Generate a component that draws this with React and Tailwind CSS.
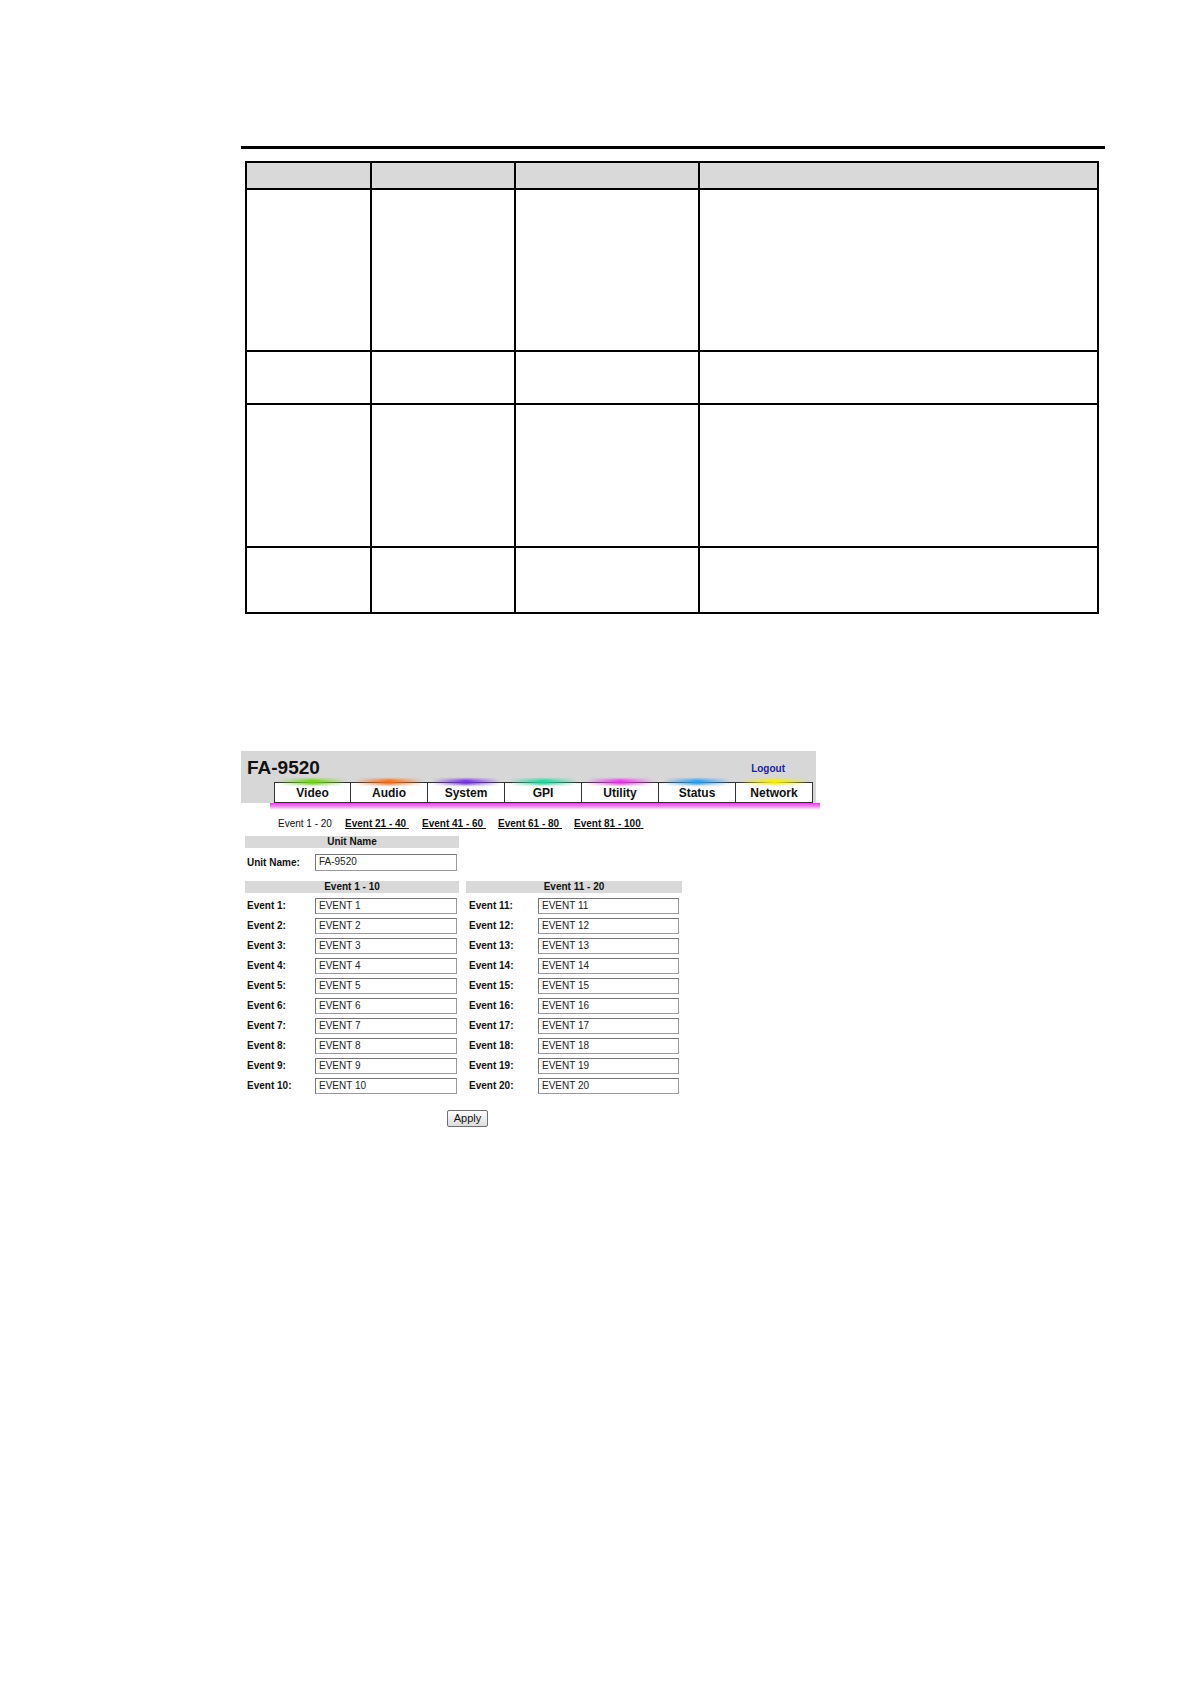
import React from 'react';

const TABS = [
  { label: 'Video', glow: 'via-[#6fd21a]' },
  { label: 'Audio', glow: 'via-[#f0701c]' },
  { label: 'System', glow: 'via-[#7433e0]' },
  { label: 'GPI', glow: 'via-[#22d49c]' },
  { label: 'Utility', glow: 'via-[#e23ce2]' },
  { label: 'Status', glow: 'via-[#2f9de8]' },
  { label: 'Network', glow: 'via-[#f4ee10]' },
];

const LINKS = [
  { label: 'Event 1 - 20', w: 'w-[67px]' },
  { label: 'Event 21 - 40', w: 'w-[77px]' },
  { label: 'Event 41 - 60', w: 'w-[76px]' },
  { label: 'Event 61 - 80', w: 'w-[76px]' },
  { label: 'Event 81 - 100', w: 'w-[80px]' },
];

const ROW_HEIGHTS = ['h-[162px]', 'h-[53px]', 'h-[143px]', 'h-[66px]'];

const TextBox = ({ value, className = '' }) => (
  <div
    className={`h-[16px] border border-[#9a9a9a] border-t-[#777] border-l-[#777] bg-white pl-[3px] text-[10px] leading-[14px] text-[#222] ${className}`}
  >
    {value}
  </div>
);

const HeaderBar = ({ children, className = '' }) => (
  <div className={`h-[12px] bg-[#d9d9d9] text-center text-[10px] font-bold leading-[12px] text-[#111] ${className}`}>
    {children}
  </div>
);

const EventColumn = ({ title, from, labelW, inputW, pad, width }) => (
  <div className={width}>
    <HeaderBar>{title}</HeaderBar>
    <div className="mt-[5px]">
      {Array.from({ length: 10 }, (_, i) => from + i).map((n) => (
        <div key={n} className="flex h-[20px] items-start">
          <span className={`${labelW} ${pad} text-[10px] font-bold leading-[16px] text-[#111]`}>
            Event {n}:
          </span>
          <TextBox value={`EVENT ${n}`} className={inputW} />
        </div>
      ))}
    </div>
  </div>
);

export default function App() {
  return (
    <div className="w-[1191px] h-[1684px] bg-white pt-[146px] font-['Liberation_Sans',Arial,sans-serif] text-black">
      {/* rule above table */}
      <div className="ml-[241px] w-[864px] h-[3px] bg-black" />

      {/* empty parameter table */}
      <div className="ml-[245px] mt-[12px] w-[854px] border-t-2 border-l-2 border-black grid grid-cols-[125px_144px_184px_399px]">
        {[0, 1, 2, 3].map((c) => (
          <div key={`h${c}`} className="h-[27px] bg-[#d9d9d9] border-r-2 border-b-2 border-black" />
        ))}
        {ROW_HEIGHTS.map((h, r) =>
          [0, 1, 2, 3].map((c) => (
            <div key={`${r}-${c}`} className={`${h} border-r-2 border-b-2 border-black`} />
          ))
        )}
      </div>

      {/* web UI screenshot */}
      <div className="ml-[241px] mt-[137px] w-[575px] h-[52px] bg-[#d7d7d7] pt-[7px]">
        <div className="flex h-[19px] items-start justify-between">
          <span className="pl-[6px] text-[19px] font-bold leading-none text-[#111]">FA-9520</span>
          <span className="mr-[31px] mt-[5px] text-[10px] font-bold leading-[12px] text-[#23239c]">Logout</span>
        </div>
        <div className="ml-[33px] mt-[5px] flex">
          {TABS.map((t, i) => (
            <div
              key={t.label}
              className={`relative w-[77px] h-[21px] bg-white border-y border-r border-[#333] ${i === 0 ? 'border-l' : ''} flex items-center justify-center text-[12px] font-bold text-[#111]`}
            >
              <span className={`absolute -top-[4px] left-[4px] right-[4px] h-[6px] rounded-full blur-[1px] bg-linear-to-r from-transparent ${t.glow} to-transparent`} />
              <span className="relative">{t.label}</span>
            </div>
          ))}
        </div>
      </div>
      <div className="ml-[270px] w-[550px] h-[7px] blur-[0.5px] bg-linear-to-b from-[#e03ce0] via-[#f08cf0] to-white" />

      {/* event range links */}
      <div className="ml-[278px] mt-[8px] flex h-[12px] text-[10px] leading-[12px] text-[#111]">
        {LINKS.map((l, i) => (
          <span key={l.label} className={`${l.w} shrink-0 whitespace-nowrap`}>
            {i === 0 ? (
              l.label
            ) : (
              <span className="underline font-bold">{l.label}&nbsp;</span>
            )}
          </span>
        ))}
      </div>

      <div className="ml-[245px]">
        <HeaderBar className="mt-[6px] w-[214px]">Unit Name</HeaderBar>
        <div className="mt-[6px] flex h-[17px] items-start">
          <span className="w-[70px] pl-[2px] text-[10px] font-bold leading-[17px] text-[#111]">Unit Name:</span>
          <TextBox value="FA-9520" className="w-[142px] h-[17px]" />
        </div>

        <div className="mt-[10px] flex gap-[7px]">
          <EventColumn title="Event 1 - 10" from={1} width="w-[214px]" labelW="w-[70px]" pad="pl-[2px]" inputW="w-[142px]" />
          <EventColumn title="Event 11 - 20" from={11} width="w-[216px]" labelW="w-[72px]" pad="pl-[3px]" inputW="w-[141px]" />
        </div>

        <div className="ml-[202px] mt-[12px]">
          <button className="block w-[41px] h-[17px] rounded-[2px] border border-[#707070] bg-linear-to-b from-[#fdfdfd] to-[#dcdcdc] text-[11px] leading-[15px] text-[#111]">
            Apply
          </button>
        </div>
      </div>
    </div>
  );
}
